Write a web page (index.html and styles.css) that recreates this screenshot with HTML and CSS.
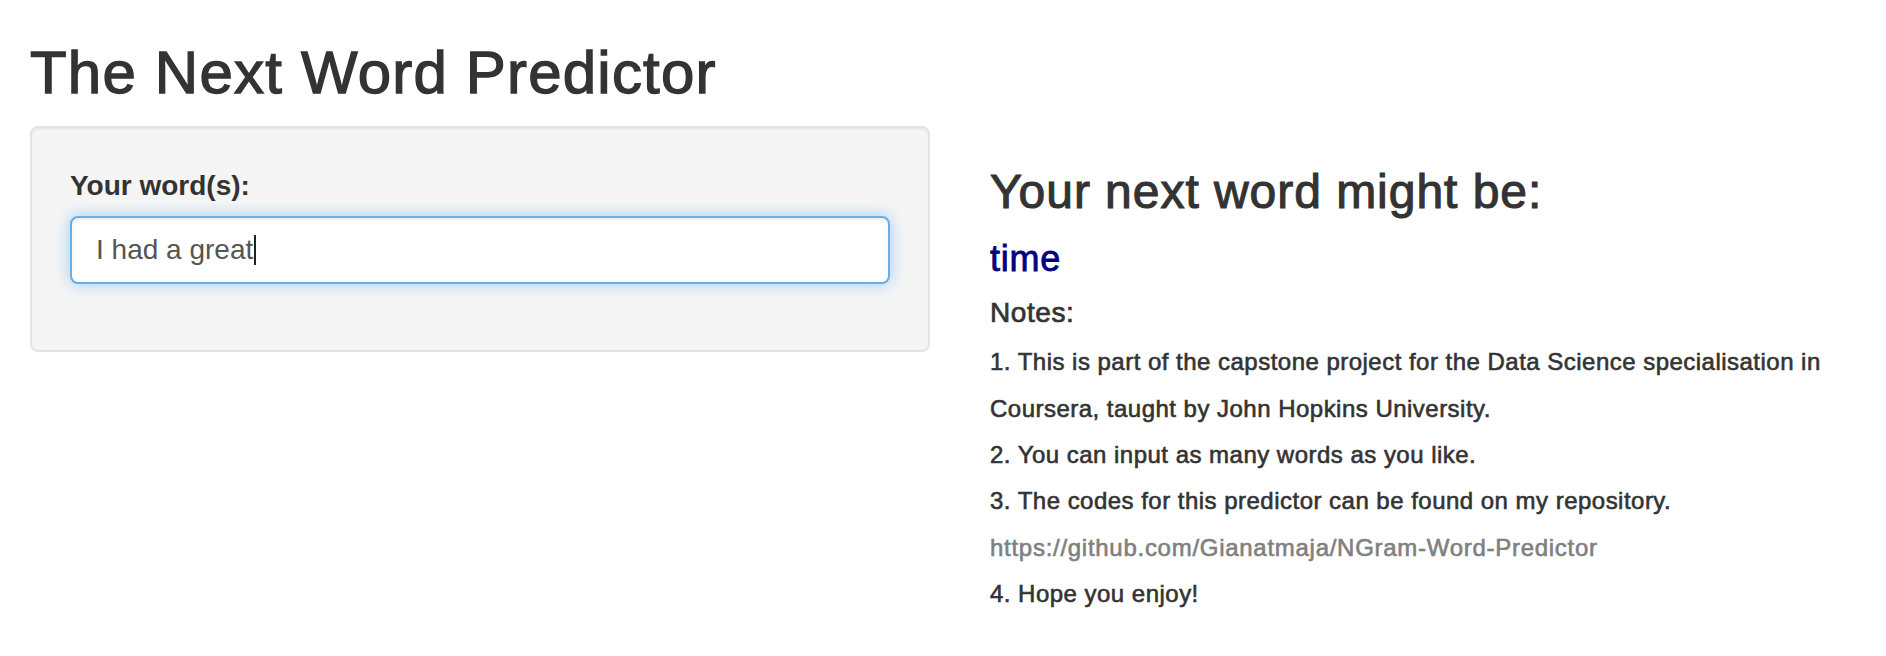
FILE: index.html
```html
<!DOCTYPE html>
<html lang="en">
<head>
<meta charset="utf-8">
<title>The Next Word Predictor</title>
<link rel="stylesheet" href="styles.css">
</head>
<body>
<div class="container-fluid">
  <h2 class="title">The Next Word Predictor</h2>
  <div class="row">
    <div class="col-side">
      <form class="well">
        <div class="form-group">
          <label class="control-label" for="words">Your word(s):</label>
          <div class="form-control focused" id="words">I had a great<span class="caret"></span></div>
        </div>
      </form>
    </div>
    <div class="col-main">
      <h3 class="heading">Your next word might be:</h3>
      <h4 class="prediction">time</h4>
      <h5 class="notes-title">Notes:</h5>
      <h6 class="note">1. This is part of the capstone project for the Data Science specialisation in</h6>
      <h6 class="note">Coursera, taught by John Hopkins University.</h6>
      <h6 class="note">2. You can input as many words as you like.</h6>
      <h6 class="note">3. The codes for this predictor can be found on my repository.</h6>
      <h6 class="note link">https://github.com/Gianatmaja/NGram-Word-Predictor</h6>
      <h6 class="note">4. Hope you enjoy!</h6>
    </div>
  </div>
</div>
</body>
</html>
```

FILE: styles.css
```css
* { box-sizing: border-box; }

html, body {
  margin: 0;
  padding: 0;
  background: #ffffff;
}

body {
  font-family: "Liberation Sans", Arial, Helvetica, sans-serif;
  font-size: 28px;
  line-height: 40px;
  color: #333333;
}

.container-fluid {
  padding: 0 30px;
}

h2, h3, h4, h5, h6 {
  font-weight: 500;
  line-height: 1.1;
  color: #333333;
  letter-spacing: 0.02em;
}

.title {
  font-size: 60px;
  margin: 40px 0 20px;
  -webkit-text-stroke: 1.3px #333333;
}

.row {
  display: flex;
  margin: 0 -30px;
}

.col-side {
  width: 960px;
  flex: none;
  padding: 0 30px;
}

.col-main {
  flex: 1;
  min-width: 0;
  padding: 0 30px;
}

.well {
  display: block;
  margin: 0 0 40px;
  padding: 38px;
  background: #f5f5f5;
  border: 2px solid #e3e3e3;
  border-radius: 8px;
  box-shadow: inset 0 2px 2px rgba(0, 0, 0, 0.05);
}

.form-group {
  margin-bottom: 28px;
}

.control-label {
  display: block;
  font-weight: 700;
  margin-bottom: 10px;
}

.form-control {
  display: flex;
  align-items: center;
  width: 100%;
  height: 68px;
  padding: 12px 24px;
  font-size: 28px;
  line-height: 40px;
  color: #555555;
  background: #ffffff;
  border: 2px solid #cccccc;
  border-radius: 8px;
  white-space: pre;
}

.form-control.focused {
  border-color: #66afe9;
  box-shadow: inset 0 2px 2px rgba(0, 0, 0, 0.075), 0 0 16px rgba(102, 175, 233, 0.6);
}

.caret {
  display: inline-block;
  width: 2px;
  height: 30px;
  margin-left: 1px;
  background: #222222;
}

.heading {
  font-size: 48px;
  margin: 40px 0 20px;
  -webkit-text-stroke: 1.1px #333333;
}

.prediction {
  font-size: 36px;
  margin: 20px 0;
  color: #000080;
  -webkit-text-stroke: 0.8px #000080;
}

.notes-title {
  font-size: 28px;
  margin: 20px 0;
  -webkit-text-stroke: 0.7px #333333;
}

.note {
  font-size: 24px;
  margin: 20px 0;
  white-space: nowrap;
  -webkit-text-stroke: 0.6px #333333;
}

.note.link {
  color: #808080;
  letter-spacing: 0.03em;
  -webkit-text-stroke: 0.6px #808080;
}
```
